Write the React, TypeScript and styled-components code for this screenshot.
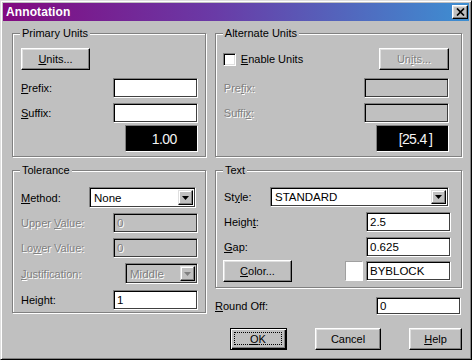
import React from 'react';
import styled, { createGlobalStyle } from 'styled-components';

const Global = createGlobalStyle`
  html, body { margin: 0; padding: 0; background: #c0c0c0; }
  body { font-family: "Liberation Sans", Arial, sans-serif; font-size: 11px; color: #000; }
  * { box-sizing: border-box; }
`;

const Window = styled.div`
  width: 472px;
  height: 360px;
  background: #c0c0c0;
  border: 1px solid;
  border-color: #dfdfdf #000 #000 #dfdfdf;
  box-shadow: inset 1px 1px #fff, inset -1px -1px #808080;
  padding: 2px;
  display: flex;
  flex-direction: column;
`;

const TitleBar = styled.div`
  height: 18px;
  background: linear-gradient(to right, #820a80 0%, #6a3aa6 45%, #3d8fd2 100%);
  display: flex;
  align-items: center;
  justify-content: space-between;
  padding: 0 1px 0 3px;
`;

const Title = styled.span`
  color: #fff;
  font-weight: bold;
  font-size: 12px;
  letter-spacing: 0.1px;
`;

const CloseBtn = styled.div`
  width: 16px;
  height: 14px;
  background: #c0c0c0;
  border: 1px solid;
  border-color: #fff #000 #000 #fff;
  box-shadow: inset -1px -1px #808080, inset 1px 1px #dfdfdf;
  display: flex;
  align-items: center;
  justify-content: center;
`;

const Body = styled.div`
  padding: 12px 7px 0 9px;
  display: flex;
  flex-direction: column;
`;

const Columns = styled.div<{ $mt?: number }>`
  display: flex;
  align-items: flex-start;
  gap: 9px;
  margin-top: ${p => p.$mt ?? 0}px;
`;

const Column = styled.div<{ $w: number }>`
  width: ${p => p.$w}px;
  display: flex;
  flex-direction: column;
`;

const Group = styled.div<{ $w: number; $h: number; $pt: number; $pr: number }>`
  position: relative;
  width: ${p => p.$w}px;
  height: ${p => p.$h}px;
  border: 1px solid #808080;
  box-shadow: inset 1px 1px #fff, 1px 1px #fff;
  padding: ${p => p.$pt}px ${p => p.$pr}px 0 7px;
  display: flex;
  flex-direction: column;
`;

const Legend = styled.span`
  position: absolute;
  top: -7px;
  left: 7px;
  padding: 0 2px;
  background: #c0c0c0;
  line-height: 13px;
`;

const Row = styled.div<{ $mt?: number; $h?: number; $justify?: string }>`
  display: flex;
  align-items: center;
  justify-content: ${p => p.$justify ?? 'space-between'};
  margin-top: ${p => p.$mt ?? 0}px;
  height: ${p => p.$h ?? 20}px;
`;

const Label = styled.span<{ $disabled?: boolean; $pl?: number }>`
  padding-left: ${p => p.$pl ?? 1}px;
  color: ${p => (p.$disabled ? '#808080' : '#000')};
  text-shadow: ${p => (p.$disabled ? '1px 1px 0 #fff' : 'none')};
  white-space: nowrap;
`;

const Field = styled.div<{ $w: number; $h?: number; $disabled?: boolean; $mr?: number }>`
  width: ${p => p.$w}px;
  height: ${p => p.$h ?? 20}px;
  margin-right: ${p => p.$mr ?? 0}px;
  background: ${p => (p.$disabled ? '#c0c0c0' : '#fff')};
  border: 1px solid;
  border-color: #808080 #fff #fff #808080;
  box-shadow: inset 1px 1px #000, inset -1px -1px #404040;
  padding: 0 3px;
  display: flex;
  align-items: center;
  font-size: 11.5px;
  color: ${p => (p.$disabled ? '#808080' : '#000')};
  text-shadow: ${p => (p.$disabled ? '1px 1px 0 #fff' : 'none')};
  white-space: nowrap;
  overflow: hidden;
`;

const SelectBox = styled(Field)`
  justify-content: space-between;
  padding: 2px 2px 2px 4px;
`;

const DropBtn = styled.span<{ $disabled?: boolean }>`
  width: 15px;
  height: 100%;
  flex: none;
  background: #c0c0c0;
  border: 1px solid;
  border-color: #dfdfdf #000 #000 #dfdfdf;
  box-shadow: inset -1px -1px #808080, inset 1px 1px #fff;
  display: flex;
  align-items: center;
  justify-content: center;
  svg { fill: ${p => (p.$disabled ? '#808080' : '#000')}; }
`;

const Display = styled.div<{ $w: number }>`
  width: ${p => p.$w}px;
  height: 27px;
  background: #000;
  border: 1px solid;
  border-color: #808080 #fff #fff #808080;
  color: #f4f4f4;
  font-family: "Liberation Sans", Arial, sans-serif;
  font-size: 14px;
  display: flex;
  align-items: center;
  justify-content: center;
  padding-left: 6px;
  letter-spacing: -0.6px;
  word-spacing: -1px;
`;

const Button = styled.div<{ $w: number; $h?: number; $disabled?: boolean }>`
  width: ${p => p.$w}px;
  height: ${p => p.$h ?? 22}px;
  flex: none;
  background: #c0c0c0;
  border: 1px solid;
  border-color: #fff #000 #000 #fff;
  box-shadow: inset -1px -1px #808080, inset 1px 1px #dfdfdf;
  display: flex;
  align-items: center;
  justify-content: center;
  color: ${p => (p.$disabled ? '#808080' : '#000')};
  text-shadow: ${p => (p.$disabled ? '1px 1px 0 #fff' : 'none')};
`;

const DefaultButton = styled(Button)`
  border-color: #000;
  box-shadow: inset 1px 1px #fff, inset -1px -1px #000, inset -2px -2px #808080;
  padding: 3px 4px 4px 3px;
`;

const Focus = styled.span`
  flex: 1;
  align-self: stretch;
  border: 1px dotted #000;
  display: flex;
  align-items: center;
  justify-content: center;
`;

const CheckBox = styled.span`
  width: 13px;
  height: 13px;
  background: #fff;
  border: 1px solid;
  border-color: #808080 #fff #fff #808080;
  box-shadow: inset 1px 1px #000, inset -1px -1px #dfdfdf;
`;

const CheckLabel = styled.span`
  display: flex;
  align-items: center;
  gap: 5px;
`;

const Swatch = styled.span`
  width: 18px;
  height: 20px;
  background: #fff;
  border: 1px solid;
  border-color: #a0a0a0 #fff #fff #a0a0a0;
  margin-right: 3px;
`;

const Pair = styled.span`
  display: flex;
  align-items: center;
`;

const ButtonBar = styled.div`
  display: flex;
  justify-content: flex-end;
  gap: 28px;
  margin-top: 13px;
`;

const Arrow = () => (
  <svg width="7" height="4" viewBox="0 0 7 4">
    <polygon points="0,0 7,0 3.5,4" />
  </svg>
);

export default function App() {
  return (
    <>
      <Global />
      <Window>
        <TitleBar>
          <Title>Annotation</Title>
          <CloseBtn>
            <svg width="9" height="8" viewBox="0 0 9 8">
              <path d="M1 0.5 L8 7.5 M8 0.5 L1 7.5" stroke="#000" strokeWidth="1.7" />
            </svg>
          </CloseBtn>
        </TitleBar>
        <Body>
          <Columns>
            <Group $w={196} $h={124} $pt={14} $pr={7}>
              <Legend>Primary Units</Legend>
              <Row $h={22} $justify="flex-start" style={{ paddingLeft: 1 }}>
                <Button $w={69}>
                  <span><u>U</u>nits...</span>
                </Button>
              </Row>
              <Row $mt={8}>
                <Label><u>P</u>refix:</Label>
                <Field $w={85} />
              </Row>
              <Row $mt={5}>
                <Label><u>S</u>uffix:</Label>
                <Field $w={85} />
              </Row>
              <Row $mt={2} $h={27} $justify="flex-end">
                <Display $w={73}>1.00</Display>
              </Row>
            </Group>
            <Group $w={250} $h={124} $pt={14} $pr={12}>
              <Legend>Alternate Units</Legend>
              <Row $h={22}>
                <CheckLabel>
                  <CheckBox />
                  <span><u>E</u>nable Units</span>
                </CheckLabel>
                <Button $w={70} $disabled>
                  <span>Un<u>i</u>ts...</span>
                </Button>
              </Row>
              <Row $mt={8}>
                <Label $disabled>Pre<u>f</u>ix:</Label>
                <Field $w={85} $disabled />
              </Row>
              <Row $mt={5}>
                <Label $disabled>Suffi<u>x</u>:</Label>
                <Field $w={85} $disabled />
              </Row>
              <Row $mt={2} $h={27} $justify="flex-end">
                <Display $w={73}>[25.4 ]</Display>
              </Row>
            </Group>
          </Columns>

          <Columns $mt={13}>
            <Group $w={196} $h={143} $pt={16} $pr={7}>
              <Legend>Tolerance</Legend>
              <Row $h={21}>
                <Label><u>M</u>ethod:</Label>
                <SelectBox $w={107} $h={21} $mr={2}>
                  <span>None</span>
                  <DropBtn><Arrow /></DropBtn>
                </SelectBox>
              </Row>
              <Row $mt={5}>
                <Label $disabled>Upper <u>V</u>alue:</Label>
                <Field $w={85} $disabled>0</Field>
              </Row>
              <Row $mt={5}>
                <Label $disabled>Lo<u>w</u>er Value:</Label>
                <Field $w={85} $disabled>0</Field>
              </Row>
              <Row $mt={5} $h={21}>
                <Label $disabled><u>J</u>ustification:</Label>
                <SelectBox $w={73} $h={21} $disabled>
                  <span>Middle</span>
                  <DropBtn $disabled><Arrow /></DropBtn>
                </SelectBox>
              </Row>
              <Row $mt={6}>
                <Label>Hei<u>g</u>ht:</Label>
                <Field $w={85}>1</Field>
              </Row>
            </Group>

            <Column $w={247}>
              <Group $w={247} $h={118} $pt={16} $pr={10}>
                <Legend>Text</Legend>
                <Row>
                  <Label>St<u>y</u>le:</Label>
                  <SelectBox $w={179} $mr={2}>
                    <span>STANDARD</span>
                    <DropBtn><Arrow /></DropBtn>
                  </SelectBox>
                </Row>
                <Row $mt={5}>
                  <Label>Heigh<u>t</u>:</Label>
                  <Field $w={85}>2.5</Field>
                </Row>
                <Row $mt={5}>
                  <Label><u>G</u>ap:</Label>
                  <Field $w={85}>0.625</Field>
                </Row>
                <Row $mt={3} $h={22}>
                  <Button $w={69}>
                    <span><u>C</u>olor...</span>
                  </Button>
                  <Pair>
                    <Swatch />
                    <Field $w={85}>BYBLOCK</Field>
                  </Pair>
                </Row>
              </Group>
              <Row $mt={9} $h={18}>
                <Label $pl={0}><u>R</u>ound Off:</Label>
                <Field $w={85} $h={18} $mr={1}>0</Field>
              </Row>
            </Column>
          </Columns>

          <ButtonBar>
            <DefaultButton $w={57}>
              <Focus><span><u>O</u>K</span></Focus>
            </DefaultButton>
            <Button $w={66}>Cancel</Button>
            <Button $w={53}><span><u>H</u>elp</span></Button>
          </ButtonBar>
        </Body>
      </Window>
    </>
  );
}
